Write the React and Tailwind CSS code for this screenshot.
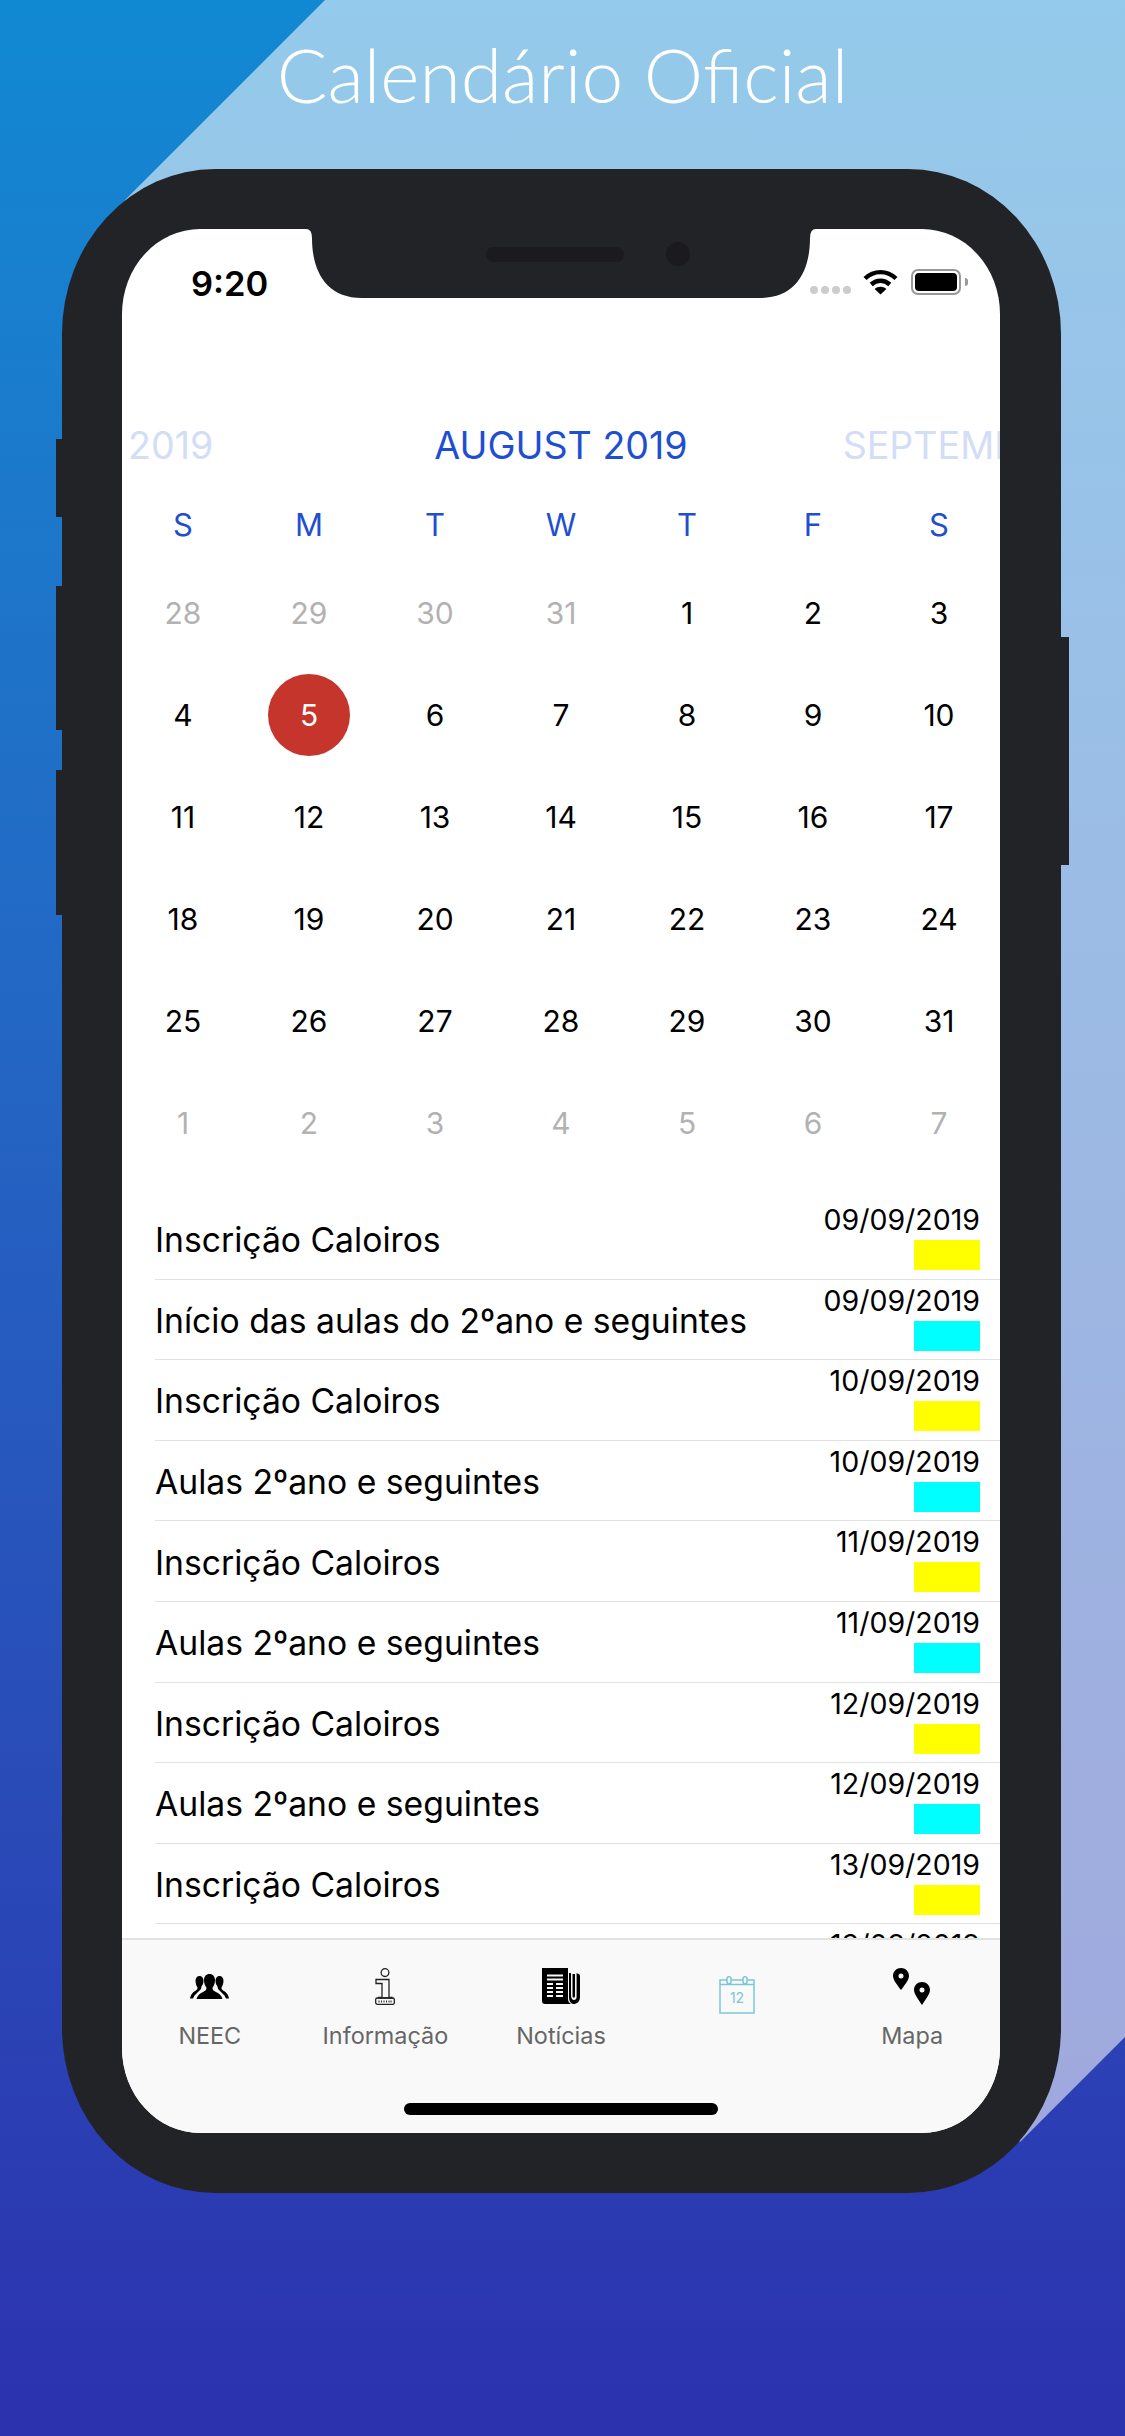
// App.jsx: "Calendário Oficial" store screenshot, phone mockup with calendar and event list.

const WEEKDAYS = ['S', 'M', 'T', 'W', 'T', 'F', 'S'];

const DAYS = [
  ...[28, 29, 30, 31].map((d) => ({ d, muted: true })),
  ...Array.from({ length: 31 }, (_, i) => ({ d: i + 1 })),
  ...[1, 2, 3, 4, 5, 6, 7].map((d) => ({ d, muted: true })),
];

const EVENTS = [
  ['Inscrição Caloiros', '09/09/2019', 'bg-[#ffff00]'],
  ['Início das aulas do 2ºano e seguintes', '09/09/2019', 'bg-[#00ffff]'],
  ['Inscrição Caloiros', '10/09/2019', 'bg-[#ffff00]'],
  ['Aulas 2ºano e seguintes', '10/09/2019', 'bg-[#00ffff]'],
  ['Inscrição Caloiros', '11/09/2019', 'bg-[#ffff00]'],
  ['Aulas 2ºano e seguintes', '11/09/2019', 'bg-[#00ffff]'],
  ['Inscrição Caloiros', '12/09/2019', 'bg-[#ffff00]'],
  ['Aulas 2ºano e seguintes', '12/09/2019', 'bg-[#00ffff]'],
  ['Inscrição Caloiros', '13/09/2019', 'bg-[#ffff00]'],
  ['Aulas 2ºano e seguintes', '13/09/2019', 'bg-[#00ffff]'],
];

function Notch() {
  return (
    <svg className="absolute left-[184px] top-0" width="510" height="70" viewBox="0 0 510 70">
      <path d="M0 0H510Q504 0 504 9C504 42 490 69 454 69H56C20 69 6 42 6 9Q6 0 0 0Z" fill="#222327" />
      <rect x="180" y="18" width="138" height="15" rx="7.5" fill="#1a1a1f" />
      <rect x="360" y="13" width="24" height="24" rx="12" fill="#1a1a1f" />
    </svg>
  );
}

function WifiIcon() {
  return (
    <svg width="35" height="26" viewBox="0 0 35 26">
      <path d="M2 9.5C11 1 24 1 33 9.5" fill="none" stroke="#000" strokeWidth="4.4" />
      <path d="M8.2 15.5C13.7 10.5 21.3 10.5 26.8 15.5" fill="none" stroke="#000" strokeWidth="4.4" />
      <path d="M17.5 25.5L11.6 20C15 17 20 17 23.4 20Z" fill="#000" />
    </svg>
  );
}

function PeopleIcon() {
  return (
    <svg className="mt-[6px]" width="39" height="25" viewBox="0 0 39 25">
      <path d="M9.5 2C12 2 13.6 4 13.5 7C13.4 9.5 12.6 11 11.5 12.5L11 15L4.5 21.5L3 24.5H0C0.5 21 2.5 18.5 5 17C7 16 7.6 15 7.5 13.5C6.5 12 5.6 9.5 5.5 7C5.4 4 7 2 9.5 2Z" fill="#000" />
      <path d="M29.5 2C27 2 25.4 4 25.5 7C25.6 9.5 26.4 11 27.5 12.5L28 15L34.5 21.5L36 24.5H39C38.5 21 36.5 18.5 34 17C32 16 31.4 15 31.5 13.5C32.5 12 33.4 9.5 33.5 7C33.6 4 32 2 29.5 2Z" fill="#000" />
      <path d="M19.5 0C23 0 25 2.6 25 6.2C25 9.4 23.8 12 22.6 13.6C22.4 15.6 23 16.6 25.5 17.8C29 19.4 31.4 21.4 32.5 25H6.5C7.6 21.4 10 19.4 13.5 17.8C16 16.6 16.6 15.6 16.4 13.6C15.2 12 14 9.4 14 6.2C14 2.6 16 0 19.5 0Z" fill="#000" />
    </svg>
  );
}

function InfoIcon() {
  return (
    <svg width="20" height="37" viewBox="0 0 20 37" fill="none" stroke="#222" strokeWidth="1.3">
      <circle cx="10" cy="4.6" r="3.9" />
      <path d="M1 11.5H14V29.5H17V30H3.5V29.5H7V15.5H1Z" />
      <rect x="0.7" y="30" width="18.6" height="6.3" rx="1.6" />
      <path d="M4 32.5V34.5M6.5 32.5V34.5M9 32.5V34.5M11.5 32.5V34.5M14 32.5V34.5M16 32.5V34.5" strokeWidth="1" />
    </svg>
  );
}

function NewsIcon() {
  return (
    <svg width="38" height="36" viewBox="0 0 38 36">
      <path d="M0 0H26V31C26 33 27 35 29 36H3C1 36 0 35 0 33Z" fill="#000" />
      <path d="M27 5H29V27C29 31 31 32 32 32C33.500 32 34.600 31 34.600 29V7C34.600 6 34.200 5.500 33.600 5.500H35C37 5.500 38 6.500 38 8.500V29C38 33.500 35 36 31.500 36C29 36 27 33 27 29Z" fill="#000" />
      <path d="M30.500 6H33V28C33 30 30.500 30 30.500 28Z" fill="#000" />
      <path d="M5 7.500H21M5 11.500H21" stroke="#f9f9f9" strokeWidth="2" />
      <path d="M5 16H11M14 16H21M5 20H11M14 20H21M5 24H11M14 24H21M5 28H11M14 28H21" stroke="#f9f9f9" strokeWidth="1.800" />
    </svg>
  );
}

function CalendarIcon() {
  return (
    <svg className="mt-[8px]" width="36" height="38" viewBox="0 0 36 38" fill="none" stroke="#7cc6d8" strokeWidth="1.500">
      <path d="M8 4H1V37H35V4H28" />
      <path d="M12 4H24" />
      <path d="M1 8.500H35" />
      <rect x="8" y="0.800" width="4" height="7" rx="2" />
      <rect x="24" y="0.800" width="4" height="7" rx="2" />
      <text x="18" y="27" fontSize="14" textAnchor="middle" fill="#7cc6d8" stroke="none" fontFamily="Inter, sans-serif">12</text>
    </svg>
  );
}

function PinsIcon() {
  return (
    <svg className="-ml-[1px]" width="37" height="37" viewBox="0 0 37 37">
      <path fillRule="evenodd" d="M8 0C12.500 0 16 3.500 16 8C16 12 11 18 8 22C5 18 0 12 0 8C0 3.500 3.500 0 8 0ZM8 5.500A2.500 2.500 0 1 0 8 10.500A2.500 2.500 0 1 0 8 5.500Z" fill="#000" />
      <path fillRule="evenodd" d="M29 14C33.500 14 37 17.500 37 22C37 26 32 32.500 29 37C26 32.500 21 26 21 22C21 17.500 24.500 14 29 14ZM29 19.500A2.500 2.500 0 1 0 29 24.500A2.500 2.500 0 1 0 29 19.500Z" fill="#000" />
    </svg>
  );
}

function TabItem({ icon, label }) {
  return (
    <div className="flex flex-col items-center pt-[28px]">
      <div className="flex h-[40px] justify-center">{icon}</div>
      <span className="mt-[13px] h-[30px] text-[23.4px] leading-[30px] text-[#666666]">{label}</span>
    </div>
  );
}

export default function App() {
  return (
    <div className="relative h-[2436px] w-[1125px] overflow-hidden bg-gradient-to-b from-[#1189d2] to-[#2c31ae] font-['Inter',sans-serif]">
      {/* lighter diagonal band behind the phone */}
      <div className="absolute inset-0 bg-white/55 [clip-path:polygon(325px_0,1125px_0,1125px_2037px,1020px_2142px,1000px_2100px,125px_200px)]" />

      <div className="relative flex h-[169px] items-start justify-center pt-[31px]">
        <h1 className="font-['Lato',sans-serif] text-[75px] leading-[86px] font-light text-white">Calendário Oficial</h1>
      </div>

      <div className="relative ml-[62px] h-[2024px] w-[999px] rounded-[153px/165px] bg-[#222327] p-[60px]">
        {/* side buttons */}
        <div className="absolute left-[-6px] top-[270px] h-[78px] w-[6px] bg-[#222327]" />
        <div className="absolute left-[-6px] top-[417px] h-[144px] w-[6px] bg-[#222327]" />
        <div className="absolute left-[-6px] top-[601px] h-[145px] w-[6px] bg-[#222327]" />
        <div className="absolute right-[-8px] top-[468px] h-[228px] w-[8px] bg-[#222327]" />

        <div className="relative flex h-[1904px] w-[878px] flex-col overflow-hidden rounded-[78px/85px] bg-white">
          <Notch />

          <div className="flex h-[71px] shrink-0 items-start justify-between pl-[69px] pr-[32px] pt-[36px]">
            <span className="text-[34.5px] leading-[38px] font-semibold text-black">9:20</span>
            <div className="flex items-center pt-[4px]">
              <div className="mr-[12px] mt-[16px] flex gap-[3px]">
                <span className="h-[8px] w-[8px] rounded-full bg-[#cccccc]" />
                <span className="h-[8px] w-[8px] rounded-full bg-[#cccccc]" />
                <span className="h-[8px] w-[8px] rounded-full bg-[#cccccc]" />
                <span className="h-[8px] w-[8px] rounded-full bg-[#cccccc]" />
              </div>
              <WifiIcon />
              <div className="ml-[13px] h-[26px] w-[50px] rounded-[7px] border-2 border-[#999999] p-[2px]">
                <div className="h-full w-full rounded-[4px] bg-black" />
              </div>
              <span className="ml-[4px] h-[8px] w-[3px] rounded-r-full bg-[#999999]" />
            </div>
          </div>

          {/* month carousel */}
          <div className="mt-[116px] flex h-[60px] shrink-0 items-center text-[37.6px] leading-[60px] text-[#1f4fd0]">
            <div className="flex min-w-0 flex-1 justify-end overflow-hidden whitespace-nowrap text-[#d3ddf6]">
              <span className="mr-[221px] shrink-0">JULY 2019</span>
            </div>
            <span className="shrink-0 whitespace-nowrap">AUGUST 2019</span>
            <div className="min-w-0 flex-1 overflow-hidden whitespace-nowrap text-[#d3ddf6]">
              <span className="ml-[155px]">SEPTEMBER 2019</span>
            </div>
          </div>

          <div className="-ml-[2px] mt-[19px] grid h-[60px] w-[882px] shrink-0 grid-cols-7 items-center text-center text-[31px] text-[#1f4fd0]">
            {WEEKDAYS.map((w, i) => (
              <span key={i}>{w}</span>
            ))}
          </div>

          <div className="-ml-[2px] mt-[7px] grid w-[882px] shrink-0 grid-cols-7 auto-rows-[102px] items-center justify-items-center text-[30px] text-black">
            {DAYS.map((day, i) =>
              day.d === 5 && !day.muted ? (
                <span key={i} className="flex h-[82px] w-[82px] items-center justify-center rounded-full bg-[#c5352b] text-white">
                  {day.d}
                </span>
              ) : (
                <span key={i} className={day.muted ? 'text-[#b2b2b2]' : ''}>
                  {day.d}
                </span>
              ),
            )}
          </div>

          <div className="mt-[25px] min-h-0 flex-1 overflow-hidden">
            {EVENTS.map(([title, date, swatch], i) => (
              <div key={i} className="ml-[33px] flex h-[80.6px] items-center justify-between border-b border-[#e2e2e2] pr-[20px]">
                <span className="pt-[3px] text-[33.7px] leading-[40px] text-black">{title}</span>
                <div className="flex h-full flex-col items-end pt-[6px]">
                  <span className="text-[28.5px] leading-[30px] text-black">{date}</span>
                  <span className={`mt-[5px] h-[30px] w-[66px] ${swatch}`} />
                </div>
              </div>
            ))}
          </div>

          <div className="flex h-[195px] shrink-0 flex-col border-t-2 border-[#e2e2e2] bg-[#f9f9f9]">
            <div className="grid grid-cols-5">
              <TabItem icon={<PeopleIcon />} label="NEEC" />
              <TabItem icon={<InfoIcon />} label="Informação" />
              <TabItem icon={<NewsIcon />} label="Notícias" />
              <TabItem icon={<CalendarIcon />} label="" />
              <TabItem icon={<PinsIcon />} label="Mapa" />
            </div>
            <div className="mb-[18px] mt-auto h-[12px] w-[314px] self-center rounded-full bg-black" />
          </div>
        </div>
      </div>
    </div>
  );
}
